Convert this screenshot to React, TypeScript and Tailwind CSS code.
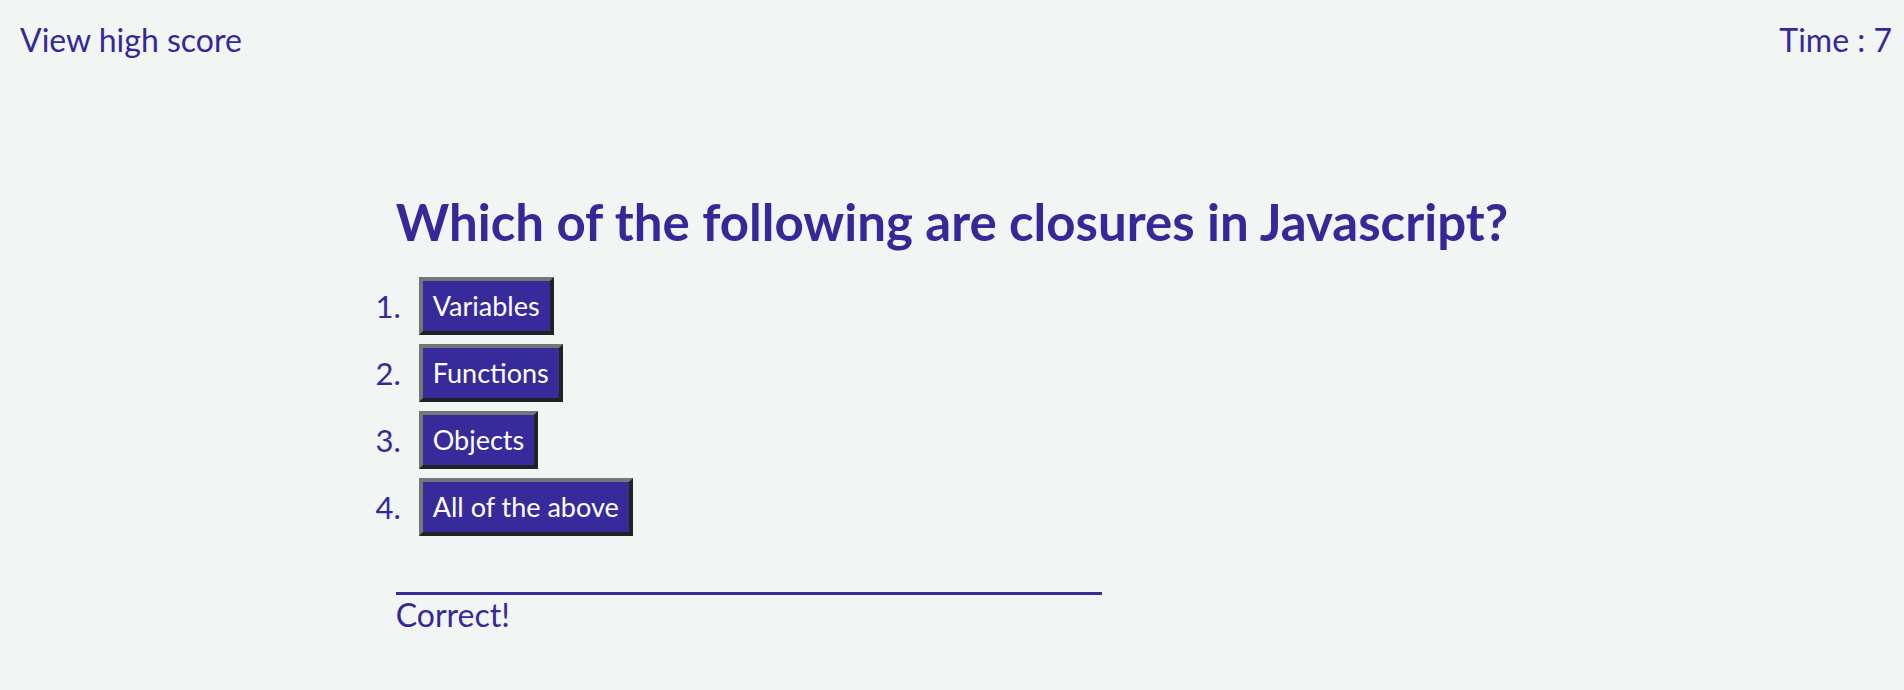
const choices = ["Variables", "Functions", "Objects", "All of the above"];

const App = () => {
  return (
    <div
      className="min-h-screen bg-[#f1f5f4] text-[#35299a]"
      style={{ fontFamily: "Lato, 'Open Sans', sans-serif" }}
    >
      <header className="flex justify-between pl-[20px] pr-[12px] pt-[22px] text-[32px] leading-[36px]">
        <a href="#">View high score</a>
        <span>Time : 7</span>
      </header>

      <main className="flex justify-center pt-[134px]">
        <div className="w-fit">
          <h1 className="text-[51px] font-bold leading-[60px]">
            Which of the following are closures in Javascript?
          </h1>
          <ol className="mt-[25px] flex flex-col gap-[9px]">
            {choices.map((choice, i) => (
              <li key={choice} className="flex items-center">
                <span className="-ml-[23px] w-[28px] text-right text-[31px]">{i + 1}.</span>
                <button className="ml-[18px] h-[58px] border-4 border-t-[#767676] border-l-[#767676] border-b-[#222222] border-r-[#222222] bg-[#372b9c] px-[10px] text-[27px] text-white">
                  {choice}
                </button>
              </li>
            ))}
          </ol>
          <div className="mt-[56px] h-[3px] w-[706px] bg-[#372b9c]" />
          <p className="mt-[2px] text-[32px] leading-[36px]">Correct!</p>
        </div>
      </main>
    </div>
  );
};

export default App;
